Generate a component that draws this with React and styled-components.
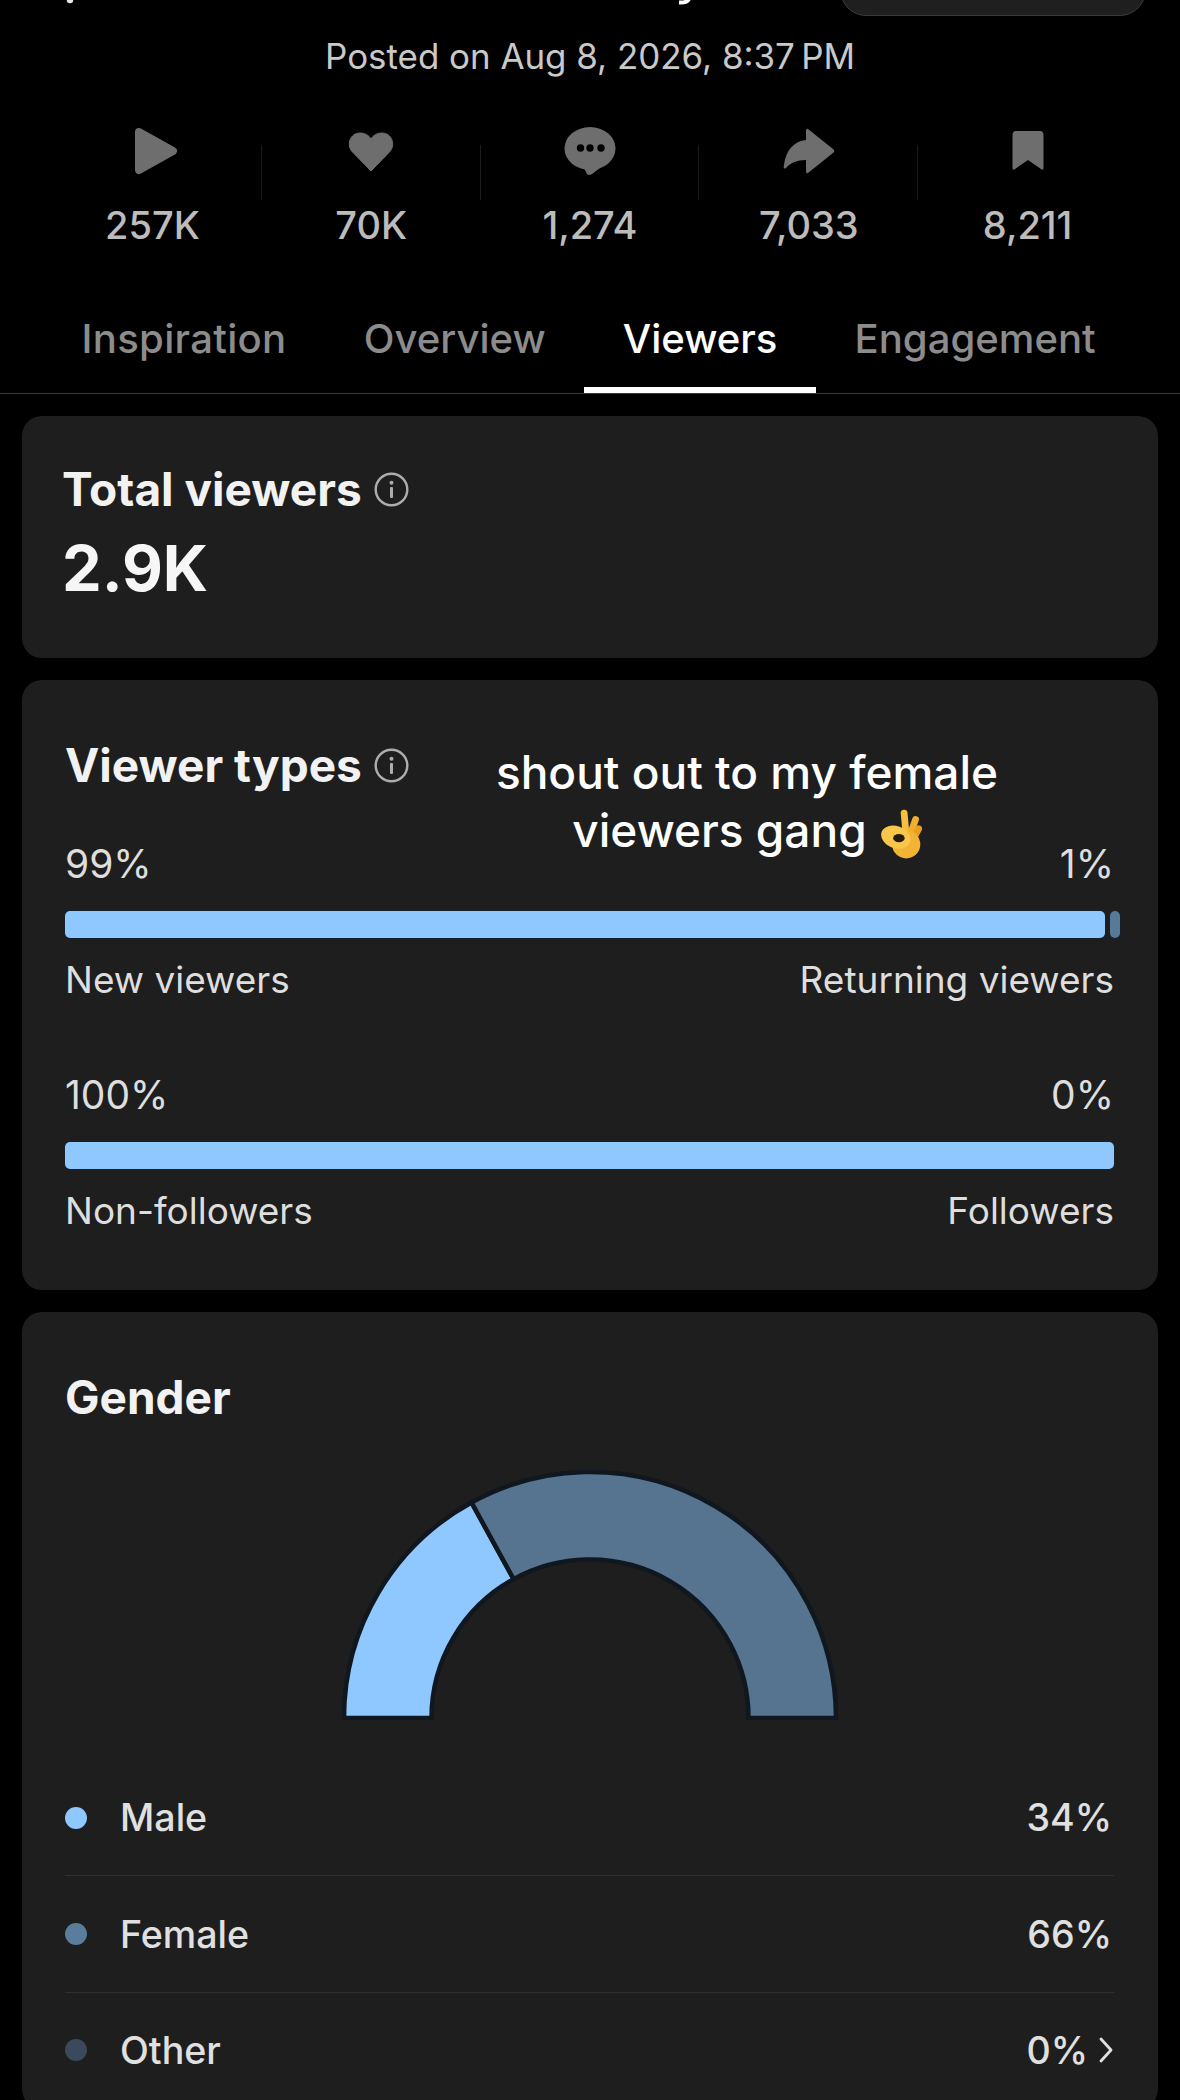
import React from "react";
import styled, { createGlobalStyle } from "styled-components";

const Global = createGlobalStyle`
  html, body { margin: 0; padding: 0; background: #000; height: 2100px; overflow: hidden; }
  body { font-family: "Inter", "Liberation Sans", sans-serif; }
  * { box-sizing: border-box; }
`;

const Page = styled.div`
  width: 1180px;
  height: 2100px;
  overflow: hidden;
  background: #000;
`;

const Clip = styled.div`
  overflow: hidden;
  height: 16px;
`;
const TopBar = styled.div`
  height: 16px;
  display: flex;
  align-items: flex-end;
  padding-left: 60px;
`;
const Fragment = styled.svg`
  display: block;
  flex: none;
  align-self: flex-start;
  margin-left: ${(p) => p.$left}px;
`;
const TopButton = styled.div`
  margin-left: auto;
  margin-right: 34px;
  flex: none;
  width: 306px;
  height: 60px;
  border-radius: 26px;
  background: #1f1f1f;
  border: 1px solid #3a3a3a;
`;

const Posted = styled.div`
  margin-top: 20px;
  text-align: center;
  font-size: 34.9px;
  line-height: 40px;
  color: #c9c9c9;
`;

const Stats = styled.div`
  margin: 51px 0 0 43px;
  display: grid;
  grid-template-columns: repeat(5, 218.8px);
`;
const Stat = styled.div`
  position: relative;
  display: flex;
  flex-direction: column;
  align-items: center;
  &:not(:last-child)::after {
    content: "";
    position: absolute;
    right: 0;
    top: 18px;
    height: 55px;
    width: 1px;
    background: #1b1b1b;
  }
`;
const StatIcon = styled.svg`
  display: block;
  fill: #6e6e6e;
`;
const StatValue = styled.div`
  margin-top: 28px;
  font-size: 38px;
  line-height: 44px;
  font-weight: 500;
  color: #bcbcbc;
`;

const Tabs = styled.div`
  margin-top: 68px;
  padding-left: 43px;
  display: flex;
  border-bottom: 1px solid #3a3a3a;
`;
const Tab = styled.div`
  padding: 0 38.6px 24px;
  font-size: 40.1px;
  line-height: 48px;
  font-weight: 500;
  letter-spacing: ${(p) => p.$spacing || 0}px;
  color: ${(p) => (p.$active ? "#fff" : "#8c8c8c")};
  border-bottom: 6px solid ${(p) => (p.$active ? "#fff" : "transparent")};
`;

const Cards = styled.div`
  padding: 22px 22px 0;
  display: flex;
  flex-direction: column;
  gap: 22px;
`;
const Card = styled.section`
  position: relative;
  background: #1e1e1e;
  border-radius: 20px;
  padding: ${(p) => p.$pad};
`;
const TitleRow = styled.div`
  display: flex;
  align-items: center;
  gap: 12px;
`;
const CardTitle = styled.h2`
  margin: 0;
  font-size: 46px;
  line-height: 52px;
  font-weight: 700;
  color: #f2f2f2;
`;
const InfoIcon = styled.svg`
  display: block;
  flex: none;
`;
const BigValue = styled.div`
  margin-top: 17px;
  font-size: 63px;
  line-height: 72px;
  font-weight: 700;
  color: #f6f6f6;
`;

const Overlay = styled.div`
  position: absolute;
  left: 375px;
  top: 64px;
  width: 700px;
  text-align: center;
  font-size: 46px;
  line-height: 57.5px;
  font-weight: 500;
  color: #fff;
`;
const Emoji = styled.svg`
  display: inline-block;
  vertical-align: -12px;
  margin-left: 13px;
`;

const Split = styled.div`
  margin-top: ${(p) => p.$top}px;
`;
const PercentRow = styled.div`
  display: flex;
  justify-content: space-between;
  font-size: 39px;
  line-height: 44px;
  color: #dedede;
`;
const LabelRow = styled(PercentRow)`
  font-size: 37px;
`;
const Bar = styled.div`
  margin: 25px 0 20px;
  display: flex;
  gap: 5px;
  height: 27px;
  margin-right: ${(p) => p.$over || 0}px;
`;
const BarPart = styled.div`
  background: ${(p) => p.$color};
  border-radius: 5px;
  box-shadow: 0 0 0 1px #14202b;
  flex: ${(p) => p.$flex};
`;

const Gauge = styled.svg`
  display: block;
  margin: 47px auto 0;
`;
const Legend = styled.div`
  margin-top: 40px;
`;
const LegendRow = styled.div`
  height: 116.4px;
  display: flex;
  align-items: center;
  border-bottom: 1px solid #2f2f2f;
  font-size: 37.6px;
  color: #e0e0e0;
  font-weight: 500;
`;
const Dot = styled.span`
  width: 22px;
  height: 22px;
  border-radius: 50%;
  background: ${(p) => p.$color};
  margin-right: 33px;
  flex: none;
`;
const LegendValue = styled.span`
  margin-left: auto;
  display: flex;
  align-items: center;
  gap: 10px;
  padding-right: ${(p) => p.$pad}px;
`;
const Chevron = styled.svg`
  display: block;
`;

const Info = () => (
  <InfoIcon width="35" height="35" viewBox="0 0 35 35">
    <circle cx="17.5" cy="17.5" r="15.8" fill="none" stroke="#adadad" strokeWidth="2.4" />
    <circle cx="17.5" cy="10.8" r="2" fill="#adadad" />
    <rect x="16" y="15" width="3" height="11" rx="1" fill="#adadad" />
  </InfoIcon>
);

const arc = (from, to) => {
  const cx = 250, cy = 248, R = 246, r = 158.5;
  const rad = (a) => (a * Math.PI) / 180;
  const pt = (rr, a) => `${(cx + rr * Math.cos(rad(a))).toFixed(2)} ${(cy - rr * Math.sin(rad(a))).toFixed(2)}`;
  return `M${pt(R, from)} A${R} ${R} 0 0 1 ${pt(R, to)} L${pt(r, to)} A${r} ${r} 0 0 0 ${pt(r, from)} Z`;
};

const stats = [
  { v: "257K", icon: <path d="M17 5 L51 24 L17 43 Z" stroke="#6e6e6e" strokeWidth="8" strokeLinejoin="round" /> },
  { v: "70K", icon: <path d="M30 44 L11.5 25 C5 18 9 6 19 6 C24 6 28 8.5 30 12 C32 8.5 36 6 41 6 C51 6 55 18 48.5 25 Z" stroke="#6e6e6e" strokeWidth="1" strokeLinejoin="round" /> },
  {
    v: "1,274",
    icon: (
      <>
        <ellipse cx="30" cy="21.5" rx="25.5" ry="21.5" />
        <path d="M24 41 L27 47 Q29 49 32 47 L44 38 Z" />
        <circle cx="20.5" cy="21" r="3.7" fill="#000" />
        <circle cx="30" cy="21" r="3.7" fill="#000" />
        <circle cx="41" cy="21" r="3.7" fill="#000" />
      </>
    ),
  },
  { v: "7,033", icon: <path d="M29 2 L54 22 Q56.5 24 54 26 L29 46 Q27 47 27 44 L27 33 C18 33 11 36 7 41 Q4 43 5 38 C7 22 16 14 27 13 L27 4 Q27 1 29 2Z" /> },
  { v: "8,211", icon: <path d="M18 4 H42 Q45.5 4 45.5 8 V41 Q45.5 44 43 42 L30 33 L17 42 Q14.5 44 14.5 41 V8 Q14.5 4 18 4Z" /> },
];

export default function App() {
  return (
    <Page>
      <Global />
      <Clip>
        <TopBar>
          <Fragment $left={5} width="10" height="4" viewBox="0 0 10 4">
            <circle cx="5" cy="0" r="3.2" fill="#e8e8e8" />
          </Fragment>
          <Fragment $left={602} width="14" height="5" viewBox="0 0 14 5">
            <path d="M12 -1 Q10 3 2 2.5" fill="none" stroke="#fff" strokeWidth="4" />
          </Fragment>
          <TopButton />
        </TopBar>
      </Clip>
      <Posted>Posted on Aug 8, 2026, 8:37{"\u2009"}PM</Posted>
      <Stats>
        {stats.map((s) => (
          <Stat key={s.v}>
            <StatIcon width="60" height="48" viewBox="0 0 60 48">{s.icon}</StatIcon>
            <StatValue>{s.v}</StatValue>
          </Stat>
        ))}
      </Stats>
      <Tabs>
        <Tab $spacing={0.3}>Inspiration</Tab>
        <Tab>Overview</Tab>
        <Tab $active>Viewers</Tab>
        <Tab>Engagement</Tab>
      </Tabs>
      <Cards>
        <Card $pad="47px 40px 54px">
          <TitleRow>
            <CardTitle>Total viewers</CardTitle>
            <Info />
          </TitleRow>
          <BigValue>2.9K</BigValue>
        </Card>
        <Card $pad="59px 44px 57px 43px">
          <TitleRow>
            <CardTitle>Viewer types</CardTitle>
            <Info />
          </TitleRow>
          <Overlay>
            shout out to my female
            <br />
            viewers gang
            <Emoji width="42" height="50" viewBox="0 0 40 48">
              <g fill="none" strokeWidth="6.5" strokeLinecap="round">
                <path d="M25 26 L23 4" stroke="#f6bf3e" />
                <path d="M28 27 L34 10" stroke="#f0ae2c" />
                <path d="M31 30 L37 19" stroke="#e89f22" />
              </g>
              <circle cx="25" cy="34" r="13.5" fill="#f3b433" />
              <ellipse cx="15" cy="27" rx="14.5" ry="10.5" fill="#f8c64a" transform="rotate(20 15 27)" />
              <ellipse cx="18" cy="28" rx="5.5" ry="4" fill="#241a10" />
            </Emoji>
          </Overlay>
          <Split $top={51}>
            <PercentRow><span>99%</span><span>1%</span></PercentRow>
            <Bar $over={-6}>
              <BarPart $color="#8fc8ff" $flex="1" />
              <BarPart $color="#587a99" $flex="0 0 10px" />
            </Bar>
            <LabelRow><span>New viewers</span><span>Returning viewers</span></LabelRow>
          </Split>
          <Split $top={71}>
            <PercentRow><span>100%</span><span>0%</span></PercentRow>
            <Bar>
              <BarPart $color="#8fc8ff" $flex="1" />
            </Bar>
            <LabelRow><span>Non-followers</span><span>Followers</span></LabelRow>
          </Split>
        </Card>
        <Card $pad="59px 44px 0 43px">
          <CardTitle>Gender</CardTitle>
          <Gauge width="500" height="250" viewBox="0 0 500 250">
            <path d={arc(180, 118.8)} fill="#8fc8ff" stroke="#10171e" strokeWidth="4.5" />
            <path d={arc(118.8, 0)} fill="#56738f" stroke="#10171e" strokeWidth="4.5" />
          </Gauge>
          <Legend>
            <LegendRow>
              <Dot $color="#8fc8ff" />Male<LegendValue $pad={2}>34%</LegendValue>
            </LegendRow>
            <LegendRow>
              <Dot $color="#5a7d9c" />Female<LegendValue $pad={2}>66%</LegendValue>
            </LegendRow>
            <LegendRow>
              <Dot $color="#3a4a5c" />Other
              <LegendValue $pad={0}>
                0%
                <Chevron width="16" height="26" viewBox="0 0 16 26">
                  <path d="M3 2 L13 13 L3 24" fill="none" stroke="#e0e0e0" strokeWidth="2.8" strokeLinecap="round" strokeLinejoin="round" />
                </Chevron>
              </LegendValue>
            </LegendRow>
          </Legend>
        </Card>
      </Cards>
    </Page>
  );
}
